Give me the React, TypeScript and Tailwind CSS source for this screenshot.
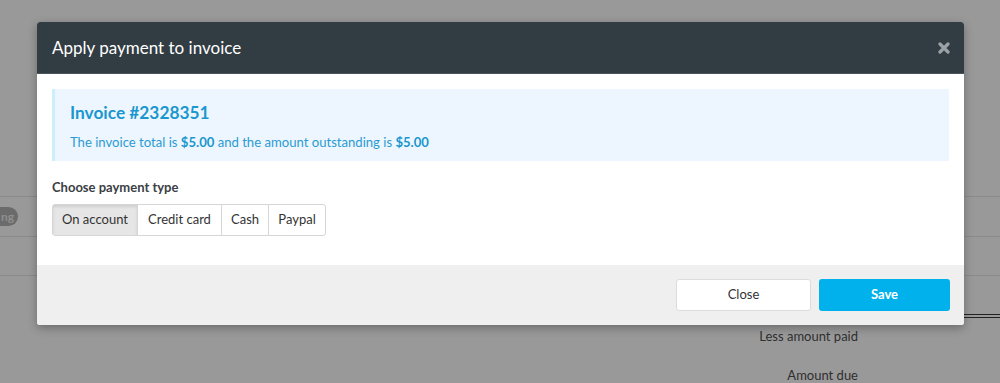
import React from "react";

export default function App() {
  const font = { fontFamily: "Lato, 'Open Sans', sans-serif" };
  return (
    <div
      className="relative w-[1000px] h-[383px] overflow-hidden bg-[#999999]"
      style={font}
    >
      {/* dimmed page behind the modal */}
      <div className="flex flex-col pt-[196px]">
        <div className="h-px bg-[#8b8b8b]" />
        <div className="h-[39px] flex items-center">
          <span className="ml-[-12px] h-[19px] w-[30px] rounded-full bg-[#6b6b6b] text-[12px] font-bold text-[#8f8f8f] flex items-center justify-end pr-[4px] leading-none">
            ng
          </span>
        </div>
        <div className="h-px bg-[#8b8b8b]" />
        <div className="h-[38px]" />
        <div className="h-px bg-[#8b8b8b]" />
        <div className="h-[38px]" />
        <div className="ml-[600px] h-[4px] border-t border-b border-[#222]" />
        <div className="flex flex-col items-end pr-[142px] text-[13px] text-[#2f2f2f]">
          <div className="mt-[9px] leading-[18px]">Less amount paid</div>
          <div className="mt-[21px] leading-[18px]">Amount due</div>
        </div>
      </div>

      {/* modal */}
      <div className="absolute left-[37px] top-[22px] w-[927px] rounded-[3px] bg-white shadow-[0_3px_10px_rgba(0,0,0,0.3)] overflow-hidden">
        <div className="h-[52px] bg-[#323c43] flex items-center justify-between px-[15px] border-b border-[#4a545b]">
          <div className="text-[17px] text-white">Apply payment to invoice</div>
          <svg width="12" height="12" viewBox="0 0 12 12" className="mr-[-1px]">
            <path
              d="M2 2 L10 10 M10 2 L2 10"
              stroke="#9da2a6"
              strokeWidth="3.2"
              strokeLinecap="round"
            />
          </svg>
        </div>
        <div className="px-[15px] pt-[15px] pb-[29px]">
          <div className="h-[72px] bg-[#edf6fe] border-l-[3px] border-[#cdeefd] pl-[15px] flex flex-col justify-center">
            <div className="text-[17.3px] font-bold text-[#1a97cf] leading-[22px] mt-[3px]">
              Invoice #2328351
            </div>
            <div className="text-[13.1px] text-[#2a9bd3] leading-[18px] mt-[9px]">
              The invoice total is <b className="font-bold text-[#1a97cf]">$5.00</b> and the amount outstanding is{" "}
              <b className="font-bold text-[#1a97cf]">$5.00</b>
            </div>
          </div>
          <div className="mt-[17px] text-[13px] font-bold text-[#3b4045] leading-[18px]">
            Choose payment type
          </div>
          <div className="mt-[8px] inline-flex h-[32px] rounded-[3px] border border-[#d6d6d6] text-[13px] text-[#333]">
            <div className="w-[85px] flex items-center justify-center bg-[#e6e6e6] shadow-[inset_0_2px_3px_rgba(0,0,0,0.1)] border-r border-[#d6d6d6]">
              On account
            </div>
            <div className="w-[84px] flex items-center justify-center border-r border-[#d6d6d6]">
              Credit card
            </div>
            <div className="w-[47px] flex items-center justify-center border-r border-[#d6d6d6]">
              Cash
            </div>
            <div className="w-[56px] flex items-center justify-center">Paypal</div>
          </div>
        </div>
        <div className="h-[60px] bg-[#efefef] flex items-start justify-end gap-[8px] pt-[14px] pr-[14px]">
          <div className="w-[135px] h-[32px] rounded-[3px] bg-white border border-[#dcdcdc] flex items-center justify-center text-[13px] text-[#333]">
            Close
          </div>
          <div className="w-[131px] h-[32px] rounded-[3px] bg-[#00b1ec] flex items-center justify-center text-[13px] font-bold text-white">
            Save
          </div>
        </div>
      </div>
    </div>
  );
}
